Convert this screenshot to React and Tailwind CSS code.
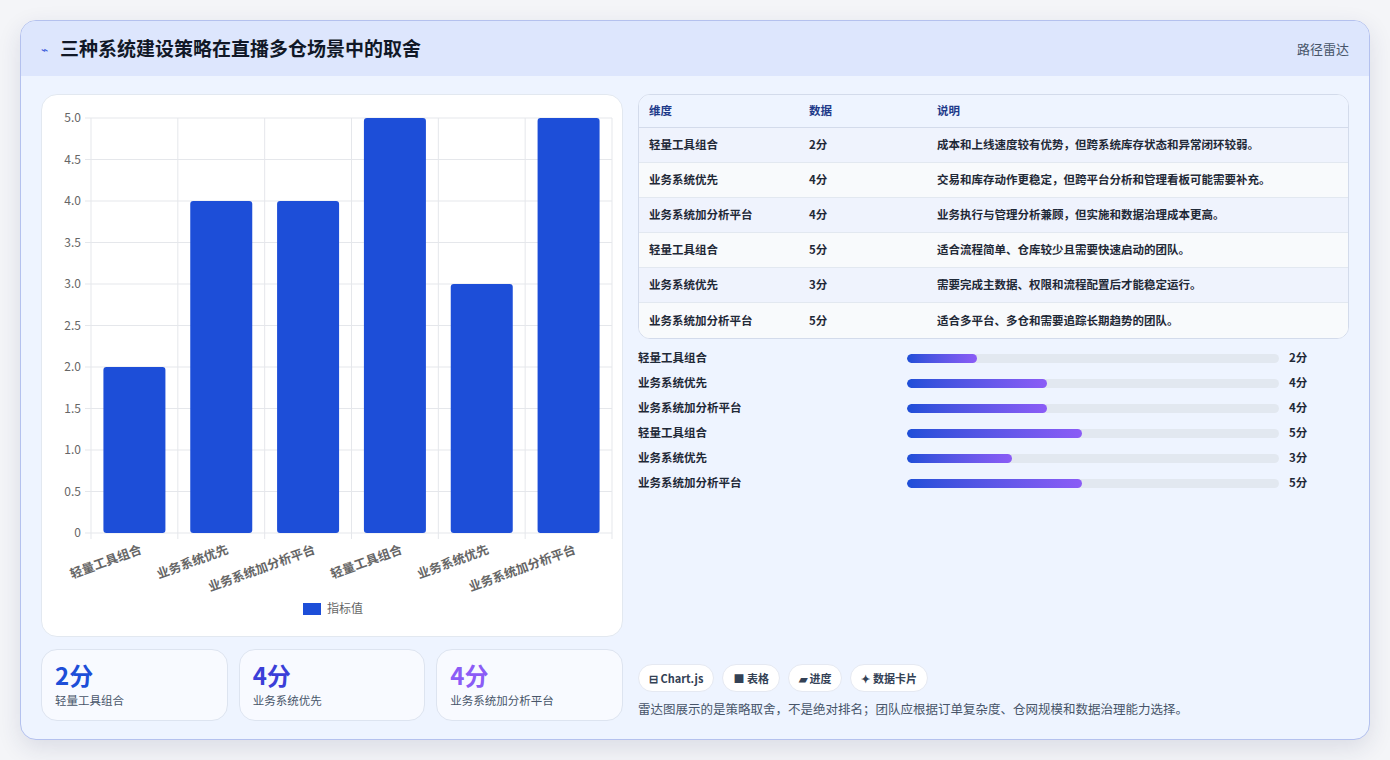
const rows = [
  ["轻量工具组合", 2, "成本和上线速度较有优势，但跨系统库存状态和异常闭环较弱。"],
  ["业务系统优先", 4, "交易和库存动作更稳定，但跨平台分析和管理看板可能需要补充。"],
  ["业务系统加分析平台", 4, "业务执行与管理分析兼顾，但实施和数据治理成本更高。"],
  ["轻量工具组合", 5, "适合流程简单、仓库较少且需要快速启动的团队。"],
  ["业务系统优先", 3, "需要完成主数据、权限和流程配置后才能稳定运行。"],
  ["业务系统加分析平台", 5, "适合多平台、多仓和需要追踪长期趋势的团队。"],
];

const font = { fontFamily: "'Noto Sans CJK SC', 'Liberation Sans', sans-serif" };

function Chart() {
  const x0 = 49, x1 = 570, y0 = 23, y1 = 438;
  const cw = (x1 - x0) / 6;
  const ticks = [0, 0.5, 1, 1.5, 2, 2.5, 3, 3.5, 4, 4.5, 5];
  const ys = (v) => y1 - (v / 5) * (y1 - y0);
  return (
    <svg width="582" height="543" style={font}>
      {ticks.map((t) => (
        <g key={t}>
          <line x1={x0 - 6} x2={x1} y1={ys(t)} y2={ys(t)} stroke="#e5e7eb" />
          <text x={x0 - 10} y={ys(t) + 4} textAnchor="end" fontSize="12" fill="#666">
            {t === 0 ? "0" : t.toFixed(1)}
          </text>
        </g>
      ))}
      {Array.from({ length: 7 }).map((_, i) => (
        <line key={i} x1={x0 + i * cw} x2={x0 + i * cw} y1={y0} y2={y1 + 6} stroke="#e5e7eb" />
      ))}
      {rows.map((r, i) => {
        const cx = x0 + i * cw + cw / 2;
        return (
          <g key={i}>
            <rect x={cx - 31} y={ys(r[1])} width="62" height={y1 - ys(r[1])} rx="3" fill="#1d4ed8" />
            <text x={cx + 8} y={y1 + 20} textAnchor="end" fontSize="12.5" fontWeight="600" fill="#666"
              transform={`rotate(-20 ${cx + 8} ${y1 + 20})`}>{r[0]}</text>
          </g>
        );
      })}
      <rect x="261" y="508" width="18" height="12" fill="#1d4ed8" />
      <text x="285" y="518" fontSize="12" fill="#666">指标值</text>
    </svg>
  );
}

export default function App() {
  const stats = [
    ["2分", "轻量工具组合", "text-[#1d4ed8]"],
    ["4分", "业务系统优先", "text-[#3b3fd8]"],
    ["4分", "业务系统加分析平台", "text-[#8b5cf6]"],
  ];
  return (
    <div className="w-[1390px] h-[760px] bg-[#f4f5f8] p-5" style={font}>
      <div className="h-[720px] rounded-2xl border border-[#b4c1ee] bg-[#eef4ff] shadow-[0_8px_24px_rgba(30,40,90,0.12)] overflow-hidden flex flex-col">
        <div className="h-[55px] bg-[#dde6fd] flex items-center justify-between px-5">
          <div className="flex items-center gap-3">
            <span className="text-[#3b5bdb] text-xs">⌁</span>
            <h1 className="text-[19px] font-bold text-[#111827]">三种系统建设策略在直播多仓场景中的取舍</h1>
          </div>
          <span className="text-[13px] text-[#475569]">路径雷达</span>
        </div>
        <div className="flex gap-[15px] px-5 pt-[18px]">
          <div className="w-[582px] flex flex-col gap-[12px]">
            <div className="h-[543px] bg-white rounded-2xl border border-[#e2e8f0]">
              <Chart />
            </div>
            <div className="grid grid-cols-3 gap-[11px]">
              {stats.map((s, i) => (
                <div key={i} className="h-[72px] rounded-2xl border border-[#dde4f0] bg-[#f8faff] px-[13px] pt-[10px]">
                  <div className={`text-[24px] font-bold leading-[30px] ${s[2]}`}>{s[0]}</div>
                  <div className="text-[11.5px] text-[#475569] mt-[2px]">{s[1]}</div>
                </div>
              ))}
            </div>
          </div>
          <div className="flex-1 flex flex-col">
            <div className="rounded-xl border border-[#d3dbeb] overflow-hidden bg-white">
              <div className="flex h-[33px] items-center bg-[#eef4ff] border-b border-[#d3dbeb] text-[11.5px] font-bold text-[#1e3a8a]">
                <div className="w-[170px] pl-[10px]">维度</div>
                <div className="w-[128px]">数据</div>
                <div>说明</div>
              </div>
              {rows.map((r, i) => (
                <div key={i} className={`flex h-[35px] items-center text-[11.5px] font-semibold text-[#1f2937] ${i < 5 ? "border-b border-[#e2e8f0]" : ""} ${i % 2 === 0 ? "bg-[#eff3fd]" : "bg-[#f8fafc]"}`}>
                  <div className="w-[170px] pl-[10px]">{r[0]}</div>
                  <div className="w-[128px]">{r[1]}分</div>
                  <div>{r[2]}</div>
                </div>
              ))}
            </div>
            <div className="mt-[10px] flex flex-col gap-[7px]">
              {rows.map((r, i) => (
                <div key={i} className="flex items-center h-[18px] text-[11.5px] font-semibold text-[#1f2937]">
                  <div className="w-[269px]">{r[0]}</div>
                  <div className="w-[372px] h-[9px] rounded-full bg-[#e2e8f0] overflow-hidden">
                    <div className="h-full rounded-full bg-gradient-to-r from-[#1d4ed8] to-[#8b5cf6]" style={{ width: `${r[1] * 35}px` }} />
                  </div>
                  <div className="ml-[10px]">{r[1]}分</div>
                </div>
              ))}
            </div>
            <div className="mt-[172px] flex gap-[8px]">
              {["⊟ Chart.js", "■ 表格", "▰ 进度", "✦ 数据卡片"].map((t) => (
                <span key={t} className="h-[28px] px-[10px] flex items-center rounded-full bg-white border border-[#e5e9f2] text-[11px] font-bold text-[#334155]">{t}</span>
              ))}
            </div>
            <p className="mt-[8px] text-[12.5px] text-[#475569]">雷达图展示的是策略取舍，不是绝对排名；团队应根据订单复杂度、仓网规模和数据治理能力选择。</p>
          </div>
        </div>
      </div>
    </div>
  );
}
